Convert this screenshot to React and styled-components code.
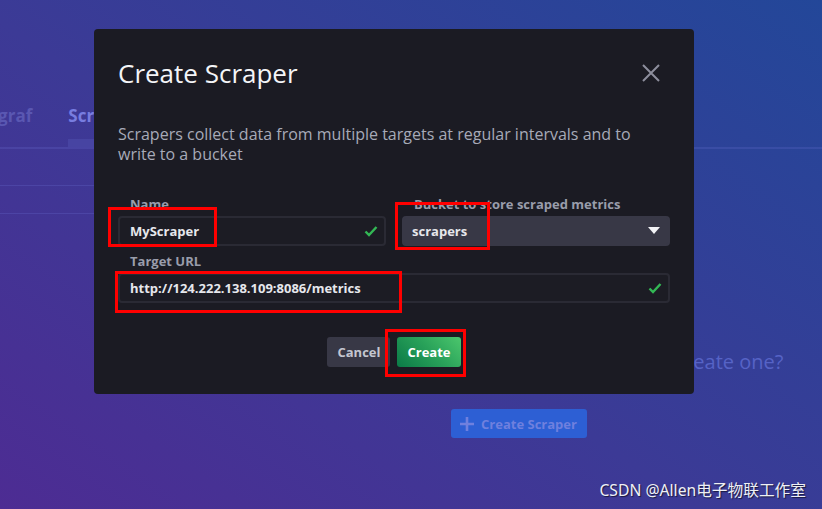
import React from 'react'
import styled, { createGlobalStyle } from 'styled-components'

const GlobalStyle = createGlobalStyle`
	html, body {
		margin: 0;
		padding: 0;
		height: 100%;
	}
	body {
		font-family: 'Open Sans', 'Liberation Sans', sans-serif;
	}
	#root {
		height: 100%;
	}
`

const Page = styled.div`
	position: relative;
	width: 100%;
	height: 100%;
	overflow: hidden;
	background: linear-gradient(35deg, #4d2c93 0%, #3c3a96 45%, #234799 100%);
`

// page beneath the dialog
const Backdrop = styled.div`
	padding-top: 100px;
`

const TabRow = styled.div`
	display: flex;
	gap: 36px;
	margin-left: -37px;
	border-bottom: 2px solid rgba(120, 130, 230, 0.18);
`

const Tab = styled.div`
	padding: 5px 0 12px;
	line-height: 22px;
	font-size: 17px;
	font-weight: 700;
	color: ${props => props.active ? '#787de0' : '#5a57b2'};
	border-bottom: 8px solid ${props => props.active ? 'rgba(120, 130, 230, 0.16)' : 'transparent'};
	padding-right: ${props => props.active ? '60px' : '0'};
`

const SearchBox = styled.div`
	margin: 36px 0 0 -20px;
	width: 330px;
	height: 27px;
	border-top: 1px solid rgba(120, 130, 230, 0.2);
	border-bottom: 1px solid rgba(120, 130, 230, 0.2);
`

const EmptyState = styled.div`
	margin: 134px 0 0 219px;
	width: 600px;
	display: flex;
	flex-direction: column;
	align-items: center;
	gap: 33px;
`

const EmptyText = styled.div`
	font-size: 20px;
	line-height: 28px;
	color: #5663c6;
	white-space: nowrap;
`

const GhostButton = styled.div`
	display: flex;
	align-items: center;
	gap: 6px;
	height: 29px;
	padding: 0 10px 0 8px;
	border-radius: 3px;
	background: #2d5fd4;
	color: #6f80de;
	font-size: 13px;
	font-weight: 700;
`

// dialog
const Modal = styled.div`
	position: absolute;
	top: 29px;
	left: 94px;
	width: 600px;
	background: #1b1b23;
	border-radius: 4px;
	padding-bottom: 27px;
`

const Header = styled.div`
	display: flex;
	justify-content: space-between;
	align-items: center;
	padding: 28px 32px 0 24px;
`

const Title = styled.div`
	font-size: 26px;
	line-height: 32px;
	color: #f4f5f8;
`

const Close = styled.div`
	width: 22px;
	height: 22px;
	display: flex;
	align-items: center;
	justify-content: center;
`

const Body = styled.div`
	padding: 35px 24px 0;
`

const Description = styled.p`
	margin: 0 0 32px;
	max-width: 520px;
	font-size: 16px;
	line-height: 20px;
	color: #a7aab8;
`

const FormGrid = styled.div`
	display: grid;
	grid-template-columns: 1fr 1fr;
	column-gap: 16px;
	row-gap: 7px;
`

const Field = styled.div`
	grid-column: ${props => props.wide ? '1 / span 2' : 'auto'};
	display: flex;
	flex-direction: column;
	gap: 4px;
`

const Label = styled.label`
	padding-left: 12px;
	font-size: 13px;
	font-weight: 700;
	line-height: 16px;
	color: #999dab;
`

const Input = styled.div`
	display: flex;
	align-items: center;
	justify-content: space-between;
	box-sizing: border-box;
	height: 30px;
	padding: 0 6px 0 10px;
	border: 2px solid #2a2a34;
	border-radius: 4px;
	background: #1c1c24;
	color: #e6e7ec;
	font-size: 13px;
	font-weight: 700;
`

const Dropdown = styled(Input)`
	border-color: #383846;
	background: #383846;
	padding: 0 8px 0 8px;
`

const Actions = styled.div`
	display: flex;
	justify-content: center;
	gap: 7px;
	margin-top: 34px;
`

const Button = styled.div`
	height: 30px;
	padding: 0 10px;
	display: flex;
	align-items: center;
	border-radius: 3px;
	font-size: 13px;
	font-weight: 700;
	color: ${props => props.primary ? '#ffffff' : '#c4c6d0'};
	background: ${props => props.primary ? 'linear-gradient(45deg, #0b7a47 0%, #2aa35a 55%, #4cc76d 100%)' : '#383846'};
`

// annotations drawn over the screenshot
const Mark = styled.div`
	position: absolute;
	box-sizing: border-box;
	border: 3px solid #ff0000;
`

const Watermark = styled.div`
	position: absolute;
	right: 16px;
	bottom: 8px;
	font-size: 15.7px;
	font-family: 'Noto Sans', 'Noto Sans CJK SC', sans-serif;
	color: #eef0f6;
	text-shadow: 1px 1px 1px rgba(0, 0, 0, 0.6);
`

const Check = () => (
	<svg width="14" height="12" viewBox="0 0 14 12">
		<path d="M1.5 6.5 L5 10 L12.5 2" fill="none" stroke="#33b855" strokeWidth="2.4" />
	</svg>
)

const marks = [
	{ left: 108, top: 207, width: 109, height: 40 },
	{ left: 395, top: 202, width: 95, height: 48 },
	{ left: 115, top: 271, width: 287, height: 42 },
	{ left: 385, top: 329, width: 81, height: 48 },
]

export default function App() {
	return (
		<Page>
			<GlobalStyle />
			<Backdrop>
				<TabRow>
					<Tab>Telegraf</Tab>
					<Tab active>Scrapers</Tab>
				</TabRow>
				<SearchBox />
				<EmptyState>
					<EmptyText>Looks like there aren't any Scrapers, why not create one?</EmptyText>
					<GhostButton>
						<svg width="16" height="16" viewBox="0 0 16 16">
							<path d="M8 1 V15 M1 8 H15" stroke="#6f80de" strokeWidth="2.6" />
						</svg>
						Create Scraper
					</GhostButton>
				</EmptyState>
			</Backdrop>

			<Modal>
				<Header>
					<Title>Create Scraper</Title>
					<Close>
						<svg width="20" height="20" viewBox="0 0 20 20">
							<path d="M2 2 L18 18 M18 2 L2 18" stroke="#8d8e9c" strokeWidth="2" />
						</svg>
					</Close>
				</Header>
				<Body>
					<Description>
						Scrapers collect data from multiple targets at regular intervals and to write to a bucket
					</Description>
					<FormGrid>
						<Field>
							<Label>Name</Label>
							<Input>MyScraper<Check /></Input>
						</Field>
						<Field>
							<Label>Bucket to store scraped metrics</Label>
							<Dropdown>
								scrapers
								<svg width="12" height="8" viewBox="0 0 12 8">
									<path d="M0 0 H12 L6 7 Z" fill="#f2f3f6" />
								</svg>
							</Dropdown>
						</Field>
						<Field wide>
							<Label>Target URL</Label>
							<Input>http://124.222.138.109:8086/metrics<Check /></Input>
						</Field>
					</FormGrid>
					<Actions>
						<Button>Cancel</Button>
						<Button primary>Create</Button>
					</Actions>
				</Body>
			</Modal>

			{marks.map((m, i) => (
				<Mark key={i} style={{ left: m.left, top: m.top, width: m.width, height: m.height }} />
			))}

			<Watermark>CSDN @Allen电子物联工作室</Watermark>
		</Page>
	)
}
